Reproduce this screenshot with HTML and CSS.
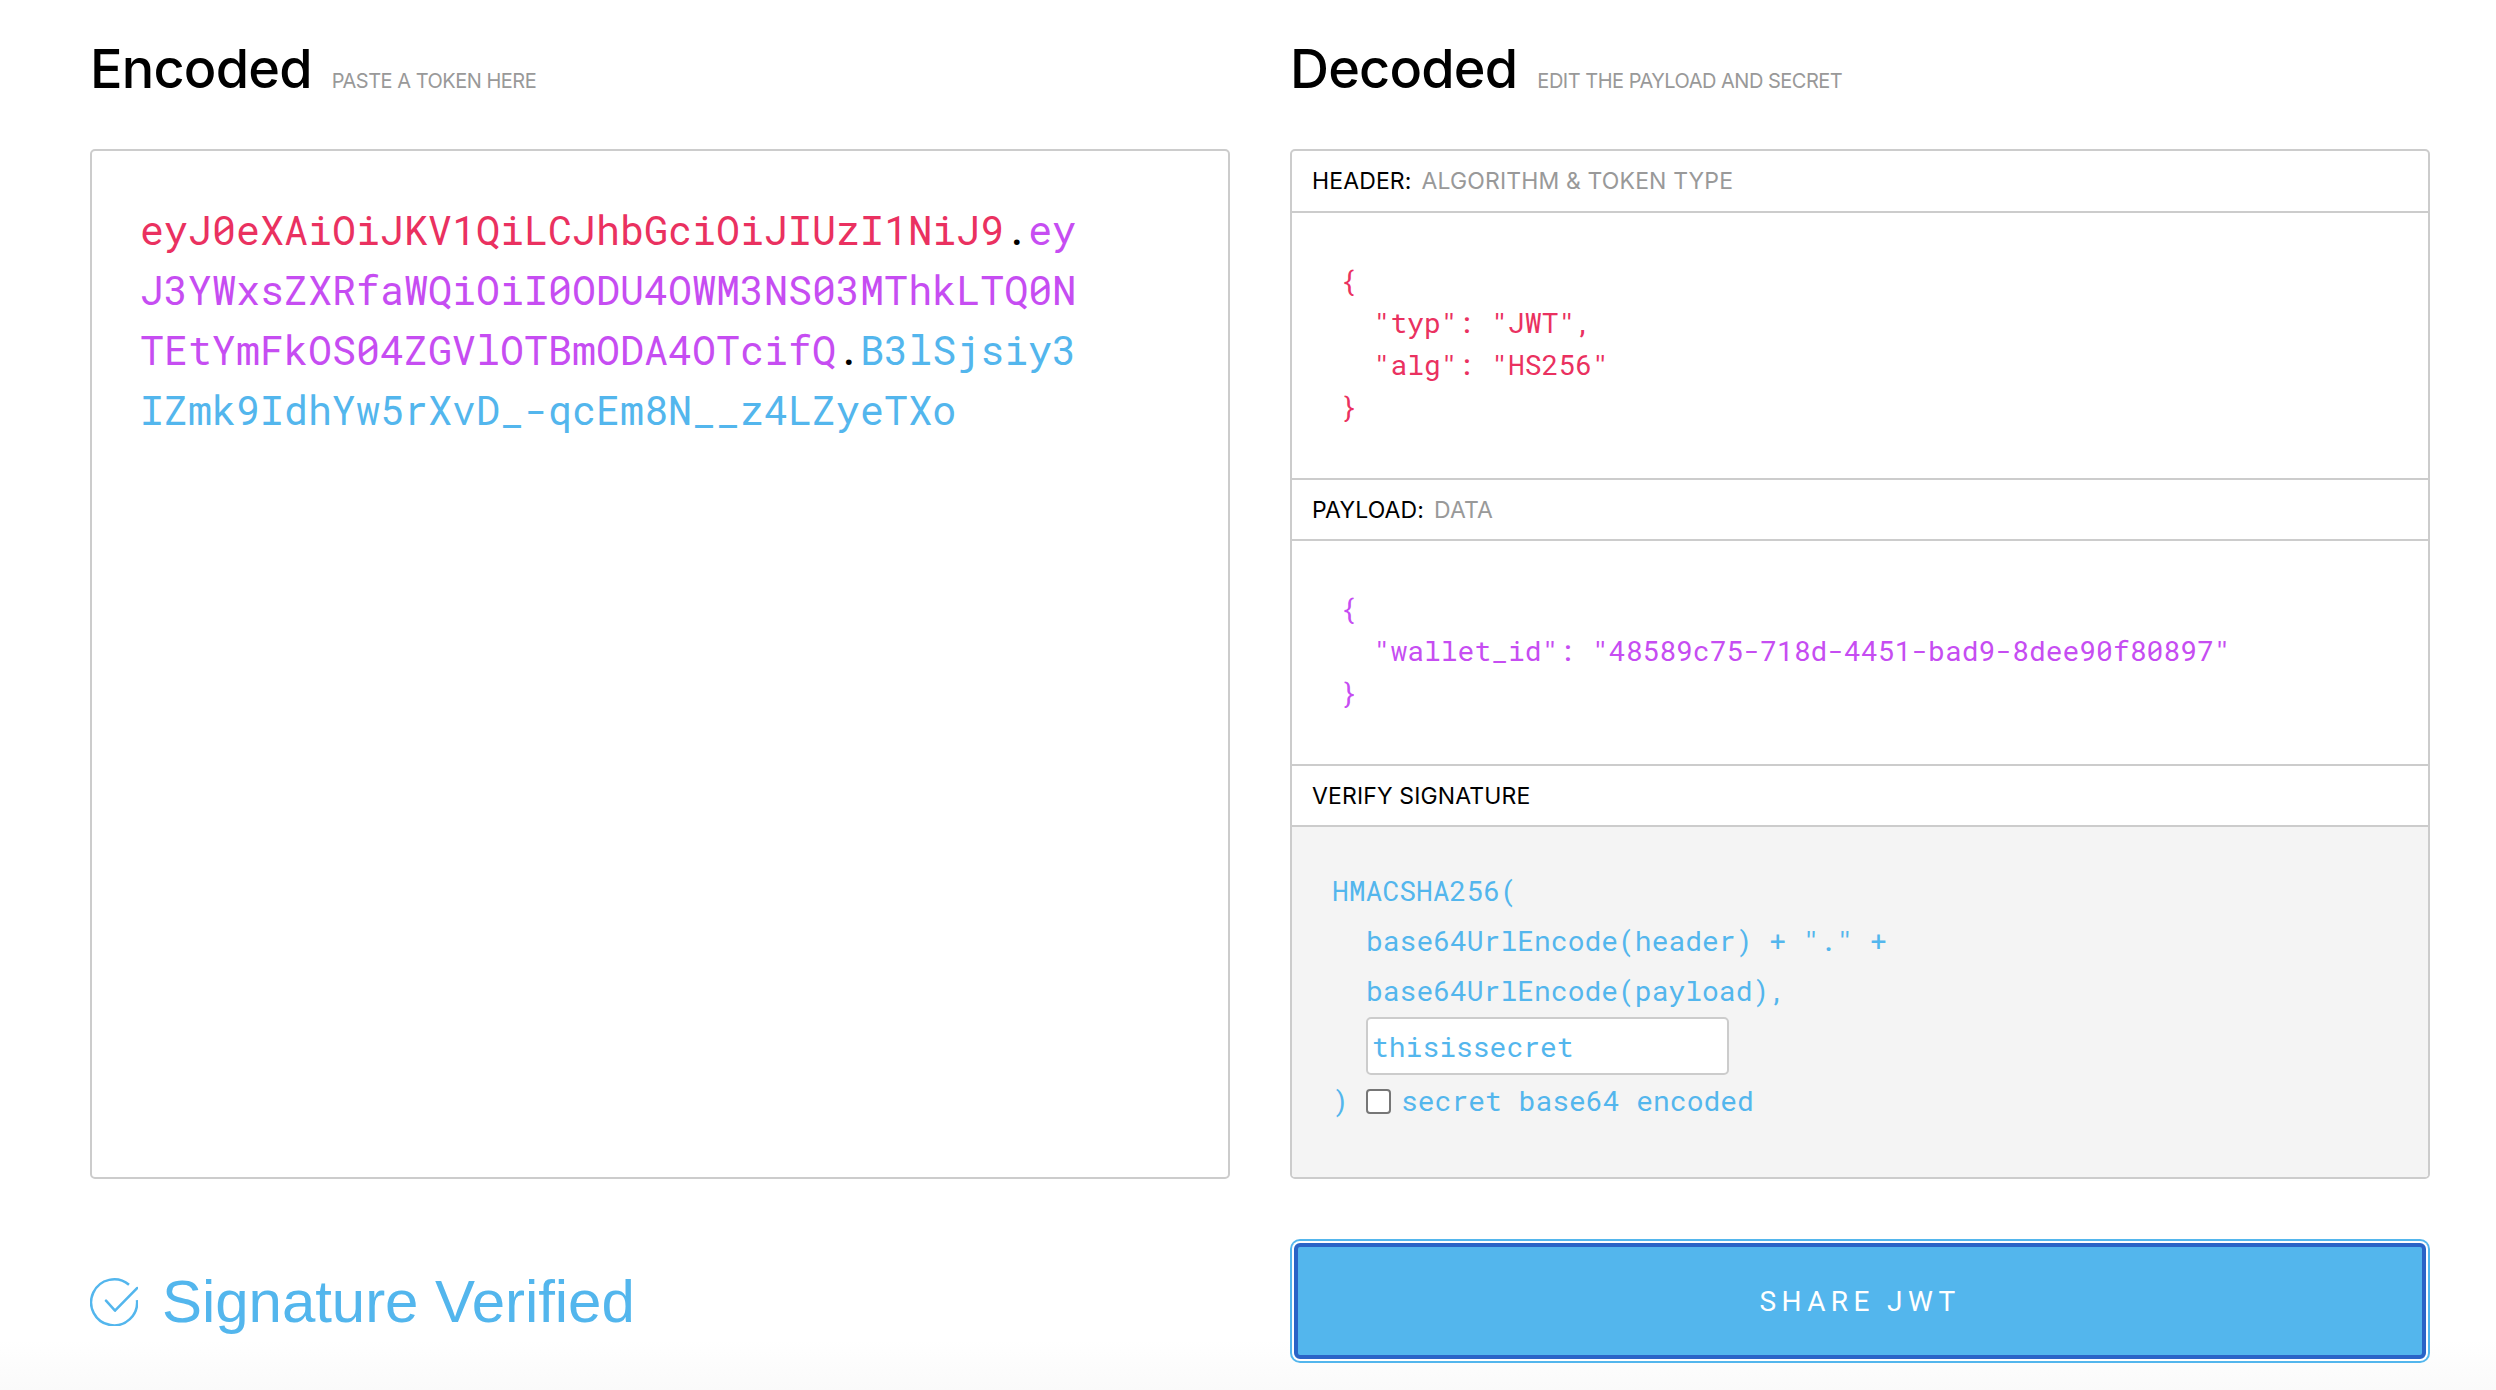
FILE: index.html
```html
<!DOCTYPE html>
<html lang="en">
<head>
<meta charset="utf-8">
<title>JWT Debugger</title>
<link rel="stylesheet" href="styles.css">
</head>
<body>
<main class="debugger">
  <section class="column">
    <div class="title-row"><h2 class="title">Encoded</h2><span class="subtitle">PASTE A TOKEN HERE</span></div>
    <div class="panel token"><span class="red">eyJ0eXAiOiJKV1QiLCJhbGciOiJIUzI1NiJ9</span><span class="dot">.</span><span class="purple">eyJ3YWxsZXRfaWQiOiI0ODU4OWM3NS03MThkLTQ0NTEtYmFkOS04ZGVlOTBmODA4OTcifQ</span><span class="dot">.</span><span class="blue">B3lSjsiy3IZmk9IdhYw5rXvD_-qcEm8N__z4LZyeTXo</span></div>
    <div class="status">
      <svg class="check" viewBox="0 0 48 48" width="48" height="48" aria-hidden="true"><path d="M39 6.800A23 23 0 1 0 47 22" fill="none" stroke="#53b6ed" stroke-width="2.500"/><path d="M16 22.700L25 32.700L47.300 10" fill="none" stroke="#53b6ed" stroke-width="2.500" stroke-linecap="round" stroke-linejoin="round"/></svg>
      <span class="status-text">Signature Verified</span>
    </div>
  </section>
  <section class="column">
    <div class="title-row"><h2 class="title">Decoded</h2><span class="subtitle">EDIT THE PAYLOAD AND SECRET</span></div>
    <div class="panel decoded">
      <div class="bar"><span class="bar-name">HEADER:</span><span class="bar-note">ALGORITHM &amp; TOKEN TYPE</span></div>
      <pre class="json red header-json">{
  "typ": "JWT",
  "alg": "HS256"
}</pre>
      <div class="bar bar-ruled"><span class="bar-name">PAYLOAD:</span><span class="bar-note">DATA</span></div>
      <pre class="json purple payload-json">{
  "wallet_id": "48589c75-718d-4451-bad9-8dee90f80897"
}</pre>
      <div class="bar bar-ruled"><span class="bar-name">VERIFY SIGNATURE</span></div>
      <div class="verify">
        <div class="line">HMACSHA256(</div>
        <div class="line indent">base64UrlEncode(header) + "." +</div>
        <div class="line indent">base64UrlEncode(payload),</div>
        <div class="indent"><input class="secret" type="text" value="thisissecret"></div>
        <div class="line close-row"><span class="paren">)</span><input class="box" type="checkbox"><span>secret base64 encoded</span></div>
      </div>
    </div>
    <button class="share" type="button">SHARE JWT</button>
  </section>
</main>
</body>
</html>
```

FILE: styles.css
```css
* { box-sizing: border-box; }
html, body { margin: 0; height: 100%; }
body {
  background: linear-gradient(#fff 1340px, #fafafa 1390px);
  overflow: hidden;
  font-family: Inter, "Liberation Sans", sans-serif;
}
.debugger {
  display: grid;
  grid-template-columns: 1140px 1140px;
  column-gap: 60px;
  padding: 0 66px 0 90px;
}
.column { display: flex; flex-direction: column; min-width: 0; }
.title-row { height: 149px; padding-top: 32px; display: flex; align-items: baseline; }
.title { margin: 0; font-size: 54px; line-height: 74px; font-weight: 450; letter-spacing: -0.8px; color: #000; }
.subtitle { margin-left: 20px; font-size: 20px; letter-spacing: -0.5px; color: #999; }
.panel { height: 1030px; border: 2px solid #ccc; border-radius: 5px; }
.token {
  padding: 49px 140px 0 48px;
  font: 450 40px/60px "Roboto Mono", "DejaVu Sans Mono", monospace;
  word-break: break-all;
}
.red { color: #ea3160; }
.purple { color: #c64df2; }
.blue { color: #53b6ed; }
.dot { color: #000; }
.status { height: 126px; margin-top: 60px; display: flex; align-items: center; gap: 24px; }
.check { flex: none; }
.status-text { font: 60px/1 "Liberation Sans", Arial, sans-serif; letter-spacing: -0.05px; color: #53b6ed; }
.decoded { display: flex; flex-direction: column; overflow: hidden; }
.bar { flex: none; height: 62px; padding: 0 20px; display: flex; align-items: center; gap: 10px; border-bottom: 2px solid #ccc; font-size: 23px; letter-spacing: 0.13px; }
.bar-ruled { border-top: 2px solid #ccc; height: 63px; }
.bar-name { color: #000; }
.bar-note { color: #999; }
.json { flex: none; margin: 0; padding: 47px 48px 0; font: 450 28px/42px "Roboto Mono", "DejaVu Sans Mono", monospace; }
.header-json { height: 265px; }
.payload-json { height: 223px; }
.verify { flex: 1; background: #f4f4f4; padding: 39px 40px 0; font: 450 28px/50px "Roboto Mono", "DejaVu Sans Mono", monospace; color: #53b6ed; }
.indent { padding-left: 34px; }
.secret { display: block; width: 363px; height: 58px; margin: 1px 0 0; padding: 0 4px; border: 2px solid #ccc; border-radius: 5px; background: #fff; color: #53b6ed; font: 450 28px "Roboto Mono", "DejaVu Sans Mono", monospace; }
.close-row { display: flex; align-items: center; height: 52px; }
.paren { width: 34px; }
.box { appearance: none; width: 25px; height: 25px; margin: 0 10px 0 0; border: 2px solid #767676; border-radius: 4px; background: #fff; flex: none; }
.share {
  height: 116px;
  margin: 64px 4px 0;
  border: 4px solid #2a64c7;
  border-radius: 6px;
  box-shadow: 0 0 0 2px #fff, 0 0 0 4px #53b6ed;
  background: #53b6ed;
  color: #fff;
  font: 400 28px Roboto, sans-serif;
  letter-spacing: 5.4px;
}
```
